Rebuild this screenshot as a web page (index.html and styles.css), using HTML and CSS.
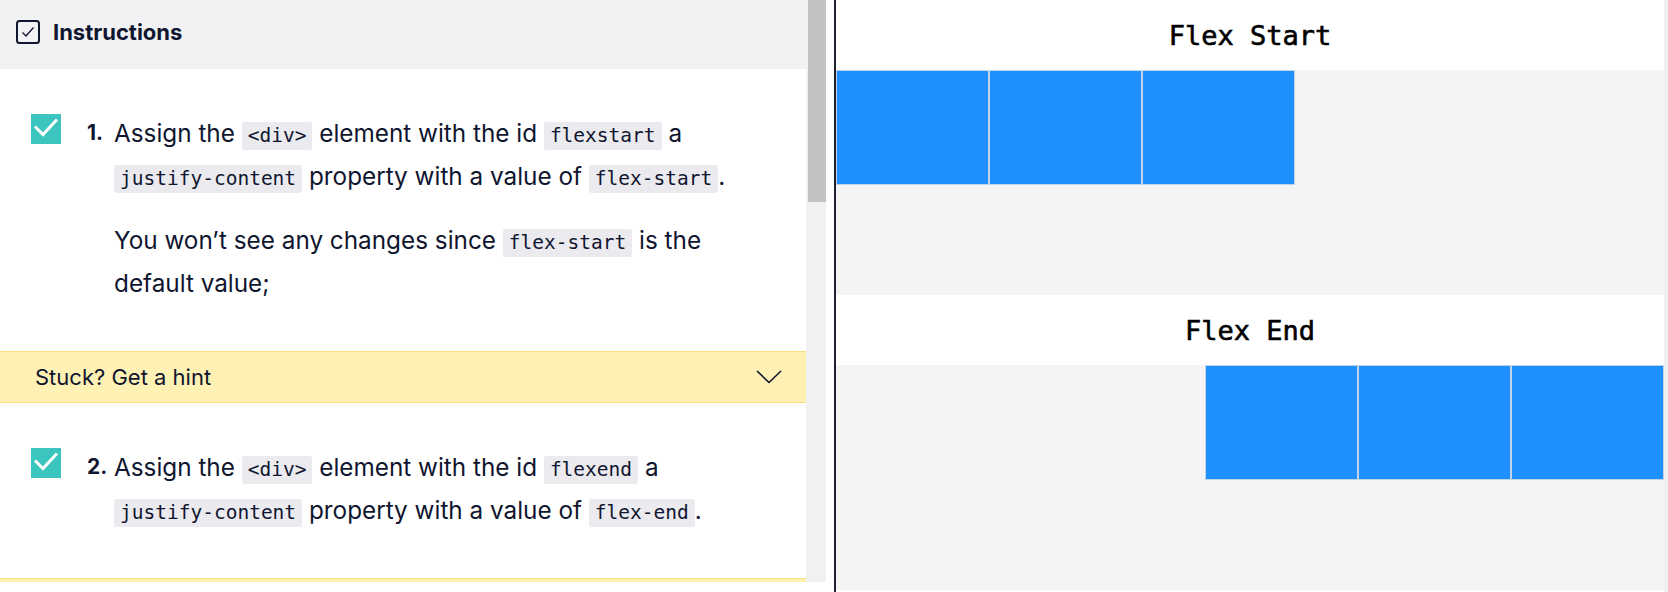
FILE: index.html
```html
<!DOCTYPE html>
<html lang="en">
<head>
<meta charset="utf-8">
<title>Flexbox justify-content</title>
<link rel="stylesheet" href="styles.css">
</head>
<body>
<div class="app">
  <div class="left">
    <div class="pane">
      <div class="scroller">
        <div class="panel-header">
          <span class="hdr-check">
            <svg width="24" height="24" viewBox="0 0 24 24"><rect x="1" y="1" width="22" height="22" rx="2.5" fill="none" stroke="#10162f" stroke-width="2"/><polyline points="6.5,12.5 10,16 17.5,7.5" fill="none" stroke="#10162f" stroke-width="1.3"/></svg>
          </span>
          <h2 class="hdr-title">Instructions</h2>
        </div>

        <div class="task">
          <span class="task-check">
            <svg width="30" height="30" viewBox="0 0 30 30"><rect width="30" height="30" fill="#3cc4be"/><polyline points="4,12.5 12,20.5 26,5.5" fill="none" stroke="#fff" stroke-width="3"/></svg>
          </span>
          <span class="task-num">1.</span>
          <div class="task-body">
            <p>Assign the <code>&lt;div&gt;</code> element with the id <code>flexstart</code> a <code>justify-content</code> property with a value of <code>flex-start</code>.</p>
            <p>You won’t see any changes since <code>flex-start</code> is the default value;</p>
          </div>
        </div>

        <div class="hint">
          <span class="hint-text">Stuck? Get a hint</span>
          <svg class="chev" width="26" height="14" viewBox="0 0 26 14"><polyline points="1,1 13,12.5 25,1" fill="none" stroke="#10162f" stroke-width="1.6"/></svg>
        </div>

        <div class="task">
          <span class="task-check">
            <svg width="30" height="30" viewBox="0 0 30 30"><rect width="30" height="30" fill="#3cc4be"/><polyline points="4,12.5 12,20.5 26,5.5" fill="none" stroke="#fff" stroke-width="3"/></svg>
          </span>
          <span class="task-num">2.</span>
          <div class="task-body">
            <p>Assign the <code>&lt;div&gt;</code> element with the id <code>flexend</code> a <code>justify-content</code> property with a value of <code>flex-end</code>.</p>
          </div>
        </div>

        <div class="hint">
          <span class="hint-text">Stuck? Get a hint</span>
          <svg class="chev" width="26" height="14" viewBox="0 0 26 14"><polyline points="1,1 13,12.5 25,1" fill="none" stroke="#10162f" stroke-width="1.6"/></svg>
        </div>
      </div>
      <div class="scrollbar"><div class="thumb"></div></div>
    </div>
  </div>
  <div class="divider"></div>
  <div class="right">
    <section class="demo">
      <h1 class="demo-title">Flex Start</h1>
      <div class="container start">
        <div class="box"></div><div class="box"></div><div class="box"></div>
      </div>
    </section>
    <section class="demo">
      <h1 class="demo-title">Flex End</h1>
      <div class="container end">
        <div class="box"></div><div class="box"></div><div class="box"></div>
      </div>
    </section>
  </div>
  <div class="edge"></div>
</div>
</body>
</html>
```

FILE: styles.css
```css
* { box-sizing: border-box; }

html, body {
  margin: 0;
  padding: 0;
  background: #fff;
}

body {
  font-family: Inter, "Noto Sans", sans-serif;
  color: #10162f;
}

.app {
  display: flex;
  width: 1668px;
  height: 592px;
  overflow: hidden;
}

/* ---------- left panel ---------- */
.left {
  width: 834px;
  flex: none;
  background: #fff;
}

.pane {
  display: flex;
  height: 582px;
  width: 826px;
}

.scroller {
  width: 806px;
  flex: none;
  height: 582px;
  overflow: hidden;
  background: #fff;
}

.scrollbar {
  width: 20px;
  flex: none;
  background: #f1f1f1;
  padding-left: 2px;
}

.thumb {
  height: 202px;
  background: #c1c1c1;
}

.panel-header {
  height: 69px;
  background: #f2f2f4;
  display: flex;
  align-items: center;
  padding: 0 0 6px 16px;
  gap: 13px;
}

.hdr-check {
  display: flex;
  width: 24px;
  height: 24px;
}

.hdr-title {
  margin: 0;
  font-size: 22px;
  font-weight: 700;
  line-height: 1;
}

.task {
  display: flex;
  align-items: flex-start;
  padding: 43px 0 46px 31px;
}

.task-check {
  display: flex;
  width: 30px;
  height: 30px;
  flex: none;
  margin-top: 2px;
}

.task-num {
  flex: none;
  width: 27px;
  margin-left: 26px;
  font-size: 21px;
  font-weight: 700;
  line-height: 42px;
}

.task-body {
  width: 645px;
  font-size: 24.3px;
  line-height: 43px;
}

.task-body p {
  margin: 0;
}

.task-body p + p {
  margin-top: 21px;
}

code {
  font-family: "DejaVu Sans Mono", "Liberation Mono", monospace;
  font-size: 19.5px;
  line-height: 1;
  background: #eaeaef;
  border-radius: 3px;
  padding: 2px 6px 3px;
  color: #10162f;
}

.hint {
  height: 52px;
  background: #fff1b4;
  border-top: 1px solid #f6df7c;
  border-bottom: 1px solid #f6df7c;
  display: flex;
  align-items: center;
  justify-content: space-between;
  padding: 0 24px 0 35px;
}

.hint-text {
  font-size: 22px;
  line-height: 1;
}

.chev {
  display: block;
}

/* ---------- divider ---------- */
.divider {
  width: 2px;
  flex: none;
  background: #1f2032;
}

/* ---------- right panel ---------- */
.right {
  width: 828px;
  flex: none;
  display: flex;
  flex-direction: column;
  background: #fff;
}

.demo-title {
  margin: 0;
  height: 70px;
  display: flex;
  align-items: center;
  justify-content: center;
  font-family: "DejaVu Sans Mono", monospace;
  font-size: 27px;
  font-weight: 400;
  -webkit-text-stroke: 0.6px #000;
  color: #000;
  background: #fff;
}

.container {
  height: 225px;
  background: #f4f4f4;
  display: flex;
  align-items: flex-start;
}

.container.start { justify-content: flex-start; }
.container.end { justify-content: flex-end; }

.box {
  width: 153px;
  height: 115px;
  background: #1e90ff;
  border: 1px solid #c3d3e6;
}

.edge {
  width: 4px;
  flex: none;
  background: #efefef;
}
```
